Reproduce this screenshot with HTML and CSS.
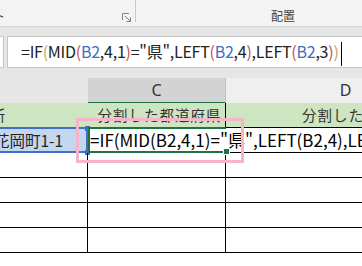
FILE: index.html
```html
<!DOCTYPE html>
<html lang="ja">
  <head>
    <meta charset="UTF-8" />
    <meta name="viewport" content="width=device-width, initial-scale=1.0" />
    <title>Excel - 都道府県の分割</title>
    <link rel="stylesheet" href="styles.css">
  </head>
  <body>
    <div class="ribbon">
      <div class="group group-font">
        <span class="group-label">フォント</span>
        <svg class="launcher" width="9" height="9" viewBox="0 0 9 9">
          <path d="M0.5 7V0.5H7" fill="none" stroke="#808080" stroke-width="1" />
          <path d="M3 3L8 8M8.5 4.5V8.5H4.5" fill="none" stroke="#808080" stroke-width="1" />
        </svg>
      </div>
      <div class="group group-align">
        <span class="group-label">配置</span>
      </div>
    </div>

    <div class="fxbar">
      <div class="namebox"></div>
      <div class="fxinput">=IF<span class="p1">(</span>MID<span class="p2">(</span><span class="ref">B2</span>,4,1<span class="p2">)</span>="県",LEFT<span class="p2">(</span><span class="ref">B2</span>,4<span class="p2">)</span>,LEFT<span class="p2">(</span><span class="ref">B2</span>,3<span class="p2">)</span><span class="p1">)</span><span class="caret"></span></div>
    </div>

    <div class="sheet">
      <div class="row colheads">
        <div class="colhead clip">B</div>
        <div class="colhead current">C</div>
        <div class="colhead light">D</div>
      </div>

      <div class="row header-row">
        <div class="cell clip">住所</div>
        <div class="cell">分割した都道府県</div>
        <div class="cell">分割した住所</div>
      </div>

      <div class="row">
        <div class="cell clip ref-cell">愛知県名古屋市花岡町1-1<span class="ref-box"></span></div>
        <div class="cell editing">=IF(MID(B2,4,1)="県",LEFT(B2,4),LEFT(B2,3))<span class="active-box"></span></div>
        <div class="cell"></div>
      </div>

      <div class="row">
        <div class="cell"></div>
        <div class="cell"></div>
        <div class="cell"></div>
      </div>
      <div class="row">
        <div class="cell"></div>
        <div class="cell"></div>
        <div class="cell"></div>
      </div>
      <div class="row">
        <div class="cell"></div>
        <div class="cell"></div>
        <div class="cell"></div>
      </div>
      <div class="row">
        <div class="cell"></div>
        <div class="cell"></div>
        <div class="cell"></div>
      </div>

      <div class="callout"></div>
    </div>
  </body>
</html>
```

FILE: styles.css
```css
* {
  margin: 0;
  padding: 0;
  box-sizing: border-box;
}
body {
  width: 362px;
  height: 266px;
  overflow: hidden;
  background: #fff;
  color: #000;
  font-family: "Noto Sans CJK JP", "Noto Sans", sans-serif;
}

/* ribbon */
.ribbon {
  display: flex;
  height: 27px;
  background: #f3f3f3;
  border-bottom: 1px solid #d6d6d6;
}
.group {
  display: flex;
  flex-shrink: 0;
  align-items: flex-end;
  height: 22px;
  overflow: hidden;
}
.group-font {
  width: 136px;
  justify-content: flex-end;
  padding-right: 4px;
  border-right: 1px solid #c8c8c8;
}
.group-align {
  width: 294px;
  justify-content: center;
}
.group-label {
  flex-shrink: 0;
  font-size: 12px;
  line-height: 12px;
  color: #444;
  white-space: nowrap;
}
.group-font .group-label {
  margin-right: 117px;
}
.launcher {
  flex-shrink: 0;
  display: block;
}

/* formula bar */
.fxbar {
  display: flex;
  gap: 3px;
  height: 51px;
  padding-top: 9px;
  background: #e6e6e6;
}
.namebox {
  width: 4px;
  height: 32px;
  background: #fff;
  border: 1px solid #c6c6c6;
  border-left: none;
}
.fxinput {
  flex: 1;
  height: 32px;
  padding-left: 13px;
  background: #fff;
  border: 1px solid #c6c6c6;
  border-right: none;
  font-size: 16px;
  letter-spacing: -0.25px;
  line-height: 29px;
  white-space: nowrap;
  color: #222;
}
.p1 {
  color: #c9a06a;
}
.p2 {
  color: #c8504f;
}
.ref {
  color: #3d6fc4;
}
.caret {
  display: inline-block;
  width: 1px;
  height: 24px;
  margin-left: 2px;
  background: #000;
  vertical-align: middle;
}

/* sheet */
.sheet {
  position: relative;
}
.row {
  display: grid;
  grid-template-columns: 88px 138px 240px;
  height: 25px;
}
.colheads {
  background: #e6e6e6;
}
.colhead {
  border-right: 1px solid #c0c0c0;
  border-bottom: 1px solid #c0c0c0;
  text-align: center;
  font-size: 16px;
  line-height: 24px;
  color: #333;
  font-family: "Noto Sans", sans-serif;
}
.colhead.current {
  background: #d3d3d3;
  border-bottom: 2px solid #217346;
}
.colhead.light {
  background: #efefef;
}
.cell {
  position: relative;
  border-right: 1px solid #000;
  border-bottom: 1px solid #000;
  font-size: 16px;
  line-height: 24px;
  white-space: nowrap;
}
.header-row .cell {
  background: #cde5c0;
  text-align: center;
  font-size: 14.5px;
  letter-spacing: 1px;
  color: #333;
  padding-left: 6px;
}
.clip {
  display: flex;
  justify-content: flex-end;
  overflow: hidden;
}
.colheads .clip {
  padding-right: 120px;
}
.header-row .clip {
  padding-right: 83px;
}
.ref-cell {
  overflow: visible;
  background: #c5d7ef;
  padding-right: 24px;
  font-size: 15.5px;
  color: #222;
}
.ref-box {
  position: absolute;
  top: -1px;
  left: -2px;
  right: -1px;
  bottom: -1px;
  border: 2px solid #3f6fc6;
}
.ref-box::before,
.ref-box::after {
  content: "";
  position: absolute;
  right: -4px;
  width: 5px;
  height: 5px;
  background: #3f6fc6;
}
.ref-box::before {
  top: -3px;
}
.ref-box::after {
  bottom: -4px;
}
.editing {
  z-index: 1;
  border-right: none;
  background: #fff;
  padding-left: 2px;
  font-size: 17px;
  line-height: 23px;
  overflow: visible;
}
.active-box {
  position: absolute;
  top: -1px;
  left: 0;
  right: 0;
  bottom: -1px;
  border: 2px solid #217346;
  border-right: none;
}
.active-box::after {
  content: "";
  position: absolute;
  right: -3px;
  bottom: -3px;
  width: 5px;
  height: 5px;
  background: #217346;
  outline: 1px solid #fff;
}
.callout {
  position: absolute;
  left: 76px;
  top: 40px;
  width: 168px;
  height: 45px;
  border: 3px solid #f3b5ca;
  z-index: 2;
}
```
